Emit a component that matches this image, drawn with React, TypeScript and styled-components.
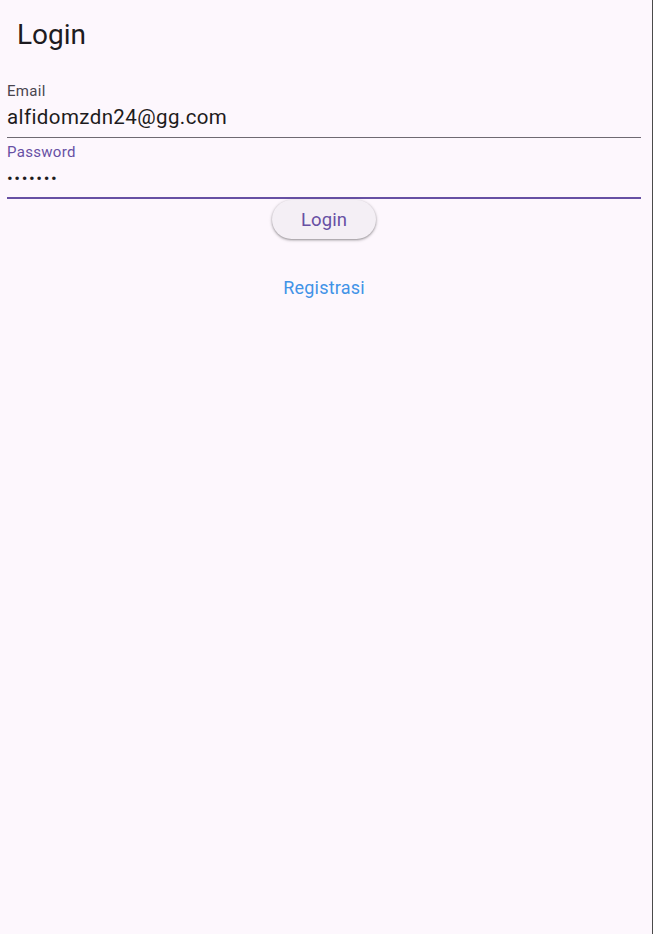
import React from "react";
import styled, { createGlobalStyle } from "styled-components";

const Global = createGlobalStyle`
  html, body { margin: 0; padding: 0; background: #fdf7fd; }
  body { font-family: Roboto, "Noto Sans", sans-serif; }
  * { box-sizing: border-box; }
`;

const Page = styled.div`
  width: 653px;
  height: 934px;
  background: #fdf7fd;
  border-right: 1px solid #4a4a4a;
  display: flex;
  flex-direction: column;
`;

const AppBar = styled.header`
  height: 68px;
  display: flex;
  align-items: center;
  padding-left: 17px;
`;

const Title = styled.h1`
  margin: 0;
  font-size: 28px;
  font-weight: 400;
  color: #1d1b20;
  letter-spacing: 0;
`;

const Body = styled.main`
  padding: 9px 11px 0 7px;
  display: flex;
  flex-direction: column;
`;

const Field = styled.div<{ $focused?: boolean }>`
  display: flex;
  flex-direction: column;
  padding-top: 4px;
  border-bottom: ${(p) => (p.$focused ? "2px solid #6750a4" : "1px solid #6f6a72")};
  padding-bottom: ${(p) => (p.$focused ? "6px" : "7px")};
`;

const Label = styled.label<{ $focused?: boolean }>`
  font-size: 15px;
  line-height: 20px;
  letter-spacing: 0.3px;
  color: ${(p) => (p.$focused ? "#6750a4" : "#49454f")};
`;

const Value = styled.div`
  margin-top: 3px;
  font-size: 20.5px;
  line-height: 26px;
  letter-spacing: 0.4px;
  color: #1d1b20;
`;

const Dots = styled.div`
  margin-top: 3px;
  font-size: 17px;
  line-height: 26px;
  letter-spacing: 1.6px;
  color: #1d1b20;
`;

const Center = styled.div`
  display: flex;
  flex-direction: column;
  align-items: center;
`;

const Button = styled.button`
  margin-top: 1px;
  width: 104px;
  height: 39px;
  border: none;
  border-radius: 20px;
  background: #f4eff5;
  color: #6750a4;
  font-family: Roboto, sans-serif;
  font-size: 18.5px;
  letter-spacing: 0.1px;
  box-shadow: 0 1px 2px rgba(0, 0, 0, 0.3), 0 1px 3px 1px rgba(0, 0, 0, 0.12);
`;

const LinkButton = styled.button`
  margin-top: 38px;
  border: none;
  background: transparent;
  color: #4193e7;
  font-family: Roboto, sans-serif;
  font-size: 18px;
  letter-spacing: 0.2px;
  padding: 0;
`;

export default function App() {
  return (
    <>
      <Global />
      <Page>
        <AppBar>
          <Title>Login</Title>
        </AppBar>
        <Body>
          <Field>
            <Label>Email</Label>
            <Value>alfidomzdn24@gg.com</Value>
          </Field>
          <Field $focused>
            <Label $focused>Password</Label>
            <Dots>•••••••</Dots>
          </Field>
          <Center>
            <Button>Login</Button>
            <LinkButton>Registrasi</LinkButton>
          </Center>
        </Body>
      </Page>
    </>
  );
}
